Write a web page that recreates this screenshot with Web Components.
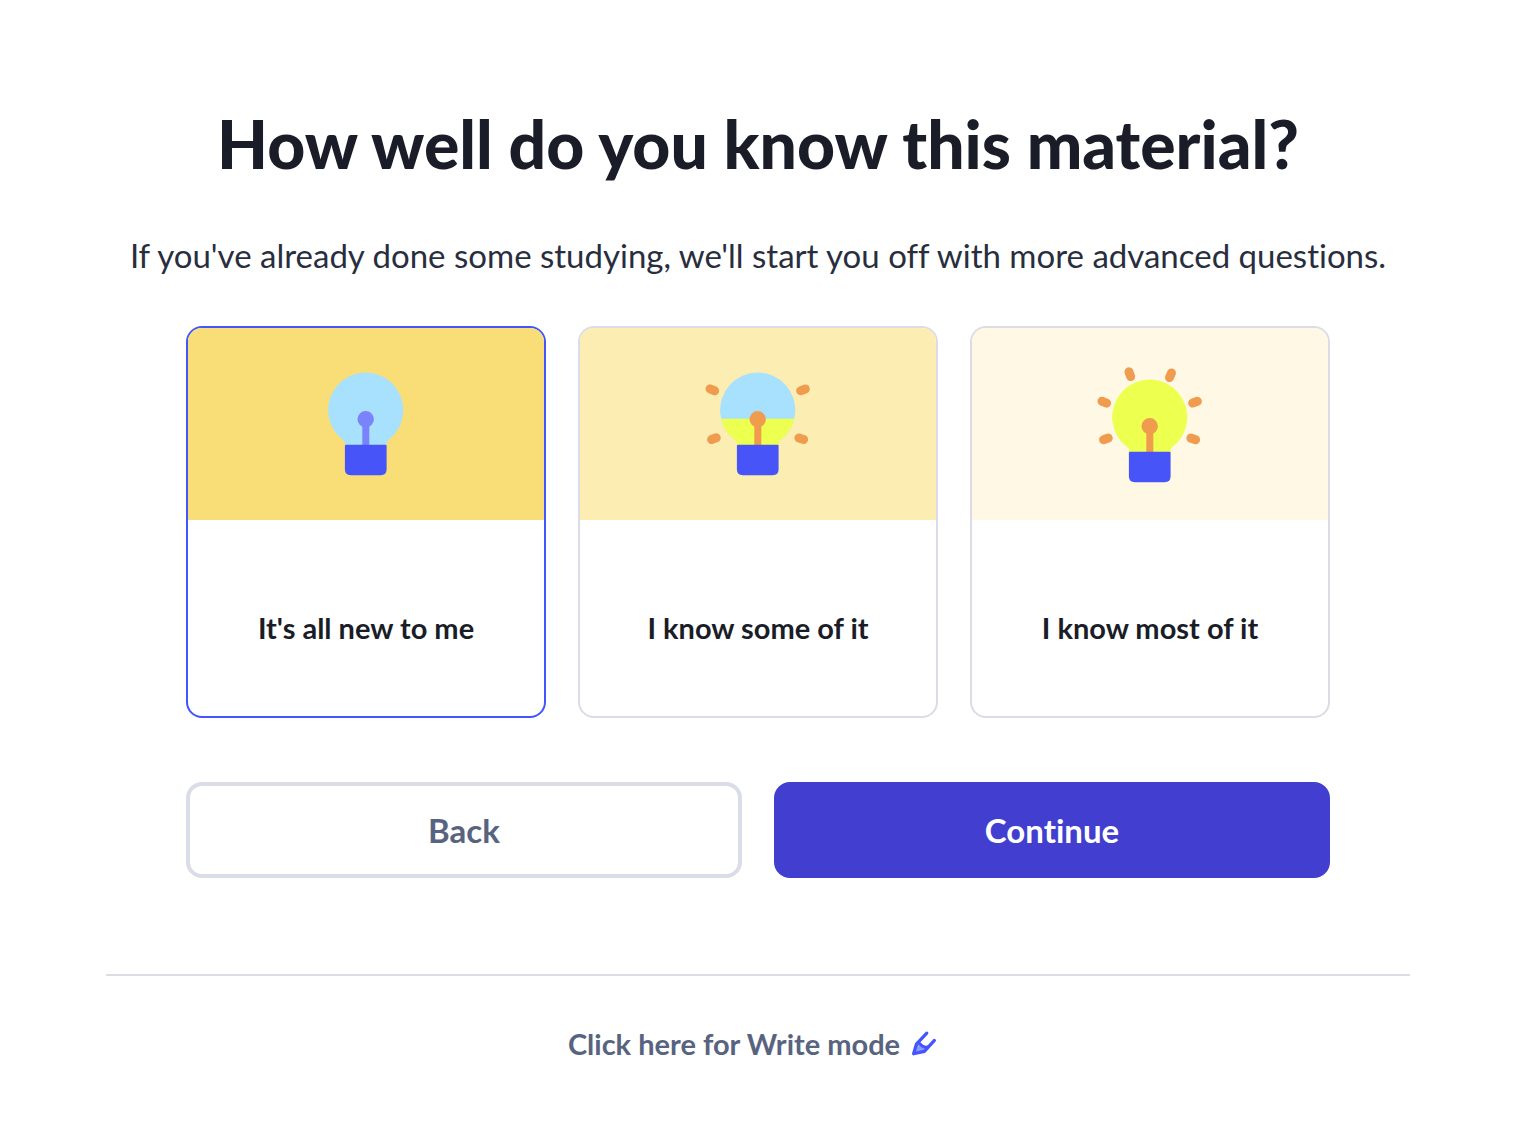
<!DOCTYPE html>
<html lang="en">
<head>
<meta charset="utf-8">
<meta name="viewport" content="width=device-width, initial-scale=1">
<title>How well do you know this material?</title>
<style>
  body { margin: 0; padding-right: 8px; background: #fff; color: #1a1d28; font-family: Lato, "Open Sans", sans-serif; font-variant-ligatures: none; }
</style>
</head>
<body>
<study-setup>
  <span slot="title">How well do you know this material?</span>
  <span slot="intro">If you've already done some studying, we'll start you off with more advanced questions.</span>
  <level-picker></level-picker>
  <step-actions></step-actions>
  <write-link slot="footer">Click here for Write mode</write-link>
</study-setup>

<script>
class StudySetup extends HTMLElement {
  constructor() {
    super();
    this.attachShadow({ mode: 'open' }).innerHTML = `
      <style>
        :host { display: block; }
        main { max-width: 1304px; margin: 0 auto; padding: 104px 0 64px; }
        h1 { margin: 0; font-size: 66px; line-height: 80px; font-weight: 900; text-align: center; }
        p { margin: 47px 0; font-size: 33px; line-height: 48px; color: #282e3e; text-align: center; }
        form { max-width: 1144px; margin: 0 auto; display: flex; flex-direction: column; gap: 64px; }
        footer { margin-top: 96px; border-top: 2px solid #dadce8; padding-top: 48px; display: flex; justify-content: center; }
      </style>
      <main>
        <h1><slot name="title"></slot></h1>
        <p><slot name="intro"></slot></p>
        <form><slot></slot></form>
        <footer><slot name="footer"></slot></footer>
      </main>`;
  }
}

class LightBulb extends HTMLElement {
  constructor() {
    super();
    const level = this.getAttribute('level');
    const rays = {
      none: [],
      half: [[14.3, 25.8, 22], [105, 25.8, -20], [15.9, 74.7, -20], [103.3, 74.7, 18]],
      full: [[14.3, 38.2, 22], [105, 38.2, -20], [15.9, 74.9, -20], [103.3, 74.9, 18], [39.8, 10.2, 70], [80.5, 11.2, -67]]
    }[level].map(([x, y, a]) =>
      `<rect x="-7" y="-4.5" width="14" height="9" rx="4.5" fill="#f09c4f" transform="translate(${x} ${y}) rotate(${a})"/>`).join('');
    const glass = level === 'full' ? '#edff4f' : '#a8e1fd';
    const wire = level === 'none' ? '#7b83fa' : '#f09c4f';
    this.attachShadow({ mode: 'open' }).innerHTML = `
      <style>:host { display: block; } svg { display: block; width: 120px; height: 120px; }</style>
      <svg viewBox="0 0 120 120" aria-hidden="true">
        ${rays}
        <g transform="translate(0 ${level === 'full' ? 7 : 0})">
          <clipPath id="lit"><rect x="0" y="54.7" width="120" height="65"/></clipPath>
          <path fill="${glass}" d="M39 81V78.8Q39 77.3 37.6 76.5A37.6 37.6 0 1 1 81.8 76.5Q80.6 77.3 80.6 78.8V81Z"/>
          ${level === 'half' ? '<path clip-path="url(#lit)" fill="#edff4f" d="M39 81V78.8Q39 77.3 37.6 76.5A37.6 37.6 0 1 1 81.8 76.5Q80.6 77.3 80.6 78.8V81Z"/>' : ''}
          <rect x="56.3" y="56" width="7" height="25" fill="${wire}"/>
          <circle cx="59.7" cy="55.3" r="8.2" fill="${wire}"/>
          <path fill="#4755f8" d="M40 80.7H79.5Q80.6 80.7 80.6 81.8V105.3Q80.6 111.2 74.7 111.2H44.8Q38.9 111.2 38.9 105.3V81.8Q38.9 80.7 40 80.7Z"/>
        </g>
      </svg>`;
  }
}

class LevelCard extends HTMLElement {
  constructor() {
    super();
    this.attachShadow({ mode: 'open' }).innerHTML = `
      <style>
        :host { display: flex; flex-direction: column; border: 2px solid var(--edge, #dadce8); border-radius: 16px; overflow: hidden; }
        .art { background: var(--art); padding: 36px 0; display: flex; justify-content: center; }
        .name { padding: 88px 16px 68px; text-align: center; font-size: 29px; line-height: 40px; font-weight: 700; }
      </style>
      <div class="art"><slot name="art"></slot></div>
      <div class="name"><slot></slot></div>`;
  }
}

class LevelPicker extends HTMLElement {
  constructor() {
    super();
    this.attachShadow({ mode: 'open' }).innerHTML = `
      <style>
        :host { display: block; }
        div { display: grid; grid-template-columns: repeat(3, 1fr); gap: 32px; }
        label { position: relative; display: block; cursor: pointer; }
        input { position: absolute; inset: 0; width: 100%; height: 100%; margin: 0; opacity: 0; cursor: pointer; }
        input:checked + level-card { --edge: #4255ff; }
        input:focus-visible + level-card { outline: 2px solid #4255ff; outline-offset: 2px; }
        .new { --art: #f9dd76; }
        .some { --art: #fcedb2; }
        .most { --art: #fff8e4; }
      </style>
      <div role="radiogroup" aria-label="Level">
        <label class="new"><input type="radio" name="level" value="new" checked><level-card><light-bulb slot="art" level="none"></light-bulb>It's all new to me</level-card></label>
        <label class="some"><input type="radio" name="level" value="some"><level-card><light-bulb slot="art" level="half"></light-bulb>I know some of it</level-card></label>
        <label class="most"><input type="radio" name="level" value="most"><level-card><light-bulb slot="art" level="full"></light-bulb>I know most of it</level-card></label>
      </div>`;
  }
}

class StepActions extends HTMLElement {
  constructor() {
    super();
    this.attachShadow({ mode: 'open' }).innerHTML = `
      <style>
        :host { display: grid; grid-template-columns: 1fr 1fr; gap: 32px; }
        button { font: inherit; font-variant-ligatures: none; font-size: 33px; line-height: 40px; font-weight: 700; padding: 24px; border: 4px solid #dadce8; border-radius: 16px; background: #fff; color: #586380; cursor: pointer; }
        .primary { background: #423ed0; border-color: #423ed0; color: #fff; }
      </style>
      <button type="button">Back</button>
      <button type="button" class="primary">Continue</button>`;
  }
}

class WriteLink extends HTMLElement {
  constructor() {
    super();
    this.attachShadow({ mode: 'open' }).innerHTML = `
      <style>
        :host { display: block; }
        a { display: flex; align-items: center; gap: 8px; padding-right: 8px; font-size: 29px; line-height: 40px; font-weight: 700; color: #586380; text-decoration: none; }
        svg { width: 32px; height: 32px; }
      </style>
      <a href="#write"><slot></slot>
        <svg viewBox="0 0 32 32" aria-hidden="true" fill="none" stroke="#4255ff" stroke-width="3.2" stroke-linecap="round" stroke-linejoin="round">
          <path fill="#8f98ff" stroke="none" d="M5.6 26L8.4 16.4 11.5 14.5 20 19.5 16.8 23.4Z"/>
          <path d="M18.8 5.2L8.4 16.2 5.6 25.8 16.4 23.4 26.4 12.4"/>
          <path d="M10.6 14.4L14.4 18.2Q16.4 19.6 19.6 19" stroke-width="2.8"/>
        </svg>
      </a>`;
  }
}

customElements.define('light-bulb', LightBulb);
customElements.define('level-card', LevelCard);
customElements.define('level-picker', LevelPicker);
customElements.define('step-actions', StepActions);
customElements.define('write-link', WriteLink);
customElements.define('study-setup', StudySetup);
</script>
</body>
</html>
